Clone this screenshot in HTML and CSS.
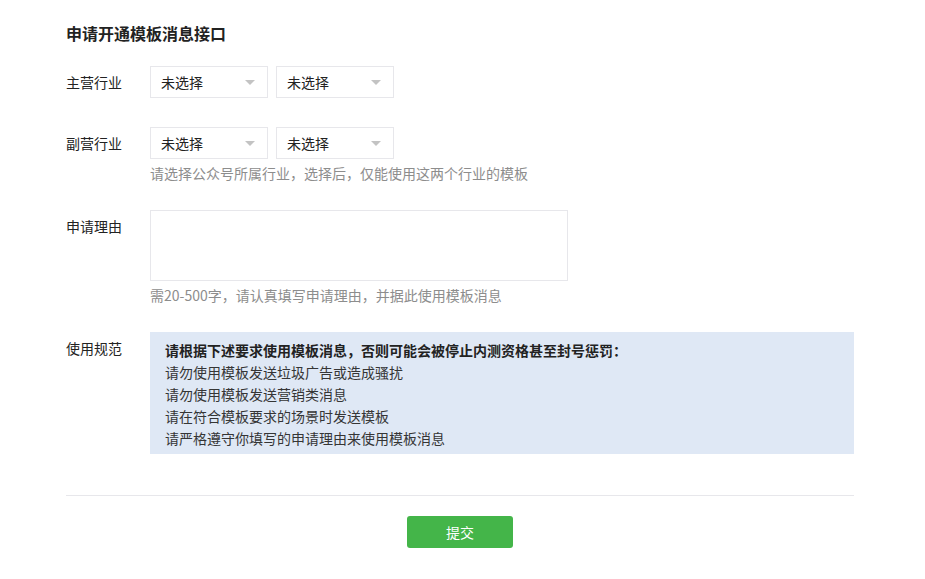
FILE: index.html
```html
<!DOCTYPE html>
<html lang="zh-CN">
<head>
    <meta charset="UTF-8">
    <meta name="viewport" content="width=device-width, initial-scale=1.0">
    <title>申请开通模板消息接口</title>
    <link rel="stylesheet" href="styles.css">
</head>
<body>
    <div class="page">
        <h2 class="page-title">申请开通模板消息接口</h2>

        <div class="form-row row-main">
            <label class="form-label">主营行业</label>
            <div class="form-field">
                <div class="selects">
                    <div class="select"><span>未选择</span><i class="arrow"></i></div>
                    <div class="select"><span>未选择</span><i class="arrow"></i></div>
                </div>
            </div>
        </div>

        <div class="form-row">
            <label class="form-label">副营行业</label>
            <div class="form-field">
                <div class="selects">
                    <div class="select"><span>未选择</span><i class="arrow"></i></div>
                    <div class="select"><span>未选择</span><i class="arrow"></i></div>
                </div>
                <p class="tips">请选择公众号所属行业，选择后，仅能使用这两个行业的模板</p>
            </div>
        </div>

        <div class="form-row">
            <label class="form-label">申请理由</label>
            <div class="form-field">
                <textarea class="reason"></textarea>
                <p class="tips">需20-500字，请认真填写申请理由，并据此使用模板消息</p>
            </div>
        </div>

        <div class="form-row row-last">
            <label class="form-label">使用规范</label>
            <div class="form-field">
                <div class="notice">
                    <p class="notice-title">请根据下述要求使用模板消息，否则可能会被停止内测资格甚至封号惩罚：</p>
                    <p>请勿使用模板发送垃圾广告或造成骚扰</p>
                    <p>请勿使用模板发送营销类消息</p>
                    <p>请在符合模板要求的场景时发送模板</p>
                    <p>请严格遵守你填写的申请理由来使用模板消息</p>
                </div>
            </div>
        </div>

        <div class="form-footer">
            <button class="btn-submit">提交</button>
        </div>
    </div>
</body>
</html>
```

FILE: styles.css
```css
* {
    margin: 0;
    padding: 0;
    box-sizing: border-box;
}
body {
    font-family: "Noto Sans CJK SC", "Noto Sans", sans-serif;
    font-size: 14px;
    color: #222;
    background: #fff;
}
.page {
    width: 788px;
    margin-left: 66px;
    padding-top: 21px;
}
.page-title {
    font-size: 16px;
    font-weight: bold;
    line-height: 24px;
    color: #222;
    margin-bottom: 21px;
}
.form-row {
    display: flex;
    margin-bottom: 26px;
}
.row-main {
    margin-bottom: 29px;
}
.row-last {
    margin-bottom: 0;
}
.form-label {
    width: 84px;
    flex-shrink: 0;
    line-height: 32px;
    color: #222;
}
.form-field {
    flex: 1;
}
.selects {
    display: flex;
    gap: 8px;
}
.select {
    position: relative;
    width: 118px;
    height: 32px;
    line-height: 30px;
    padding-left: 10px;
    border: 1px solid #e7e7eb;
    background: #fff;
    color: #222;
}
.arrow {
    position: absolute;
    right: 12px;
    top: 13px;
    width: 0;
    height: 0;
    border-left: 5px solid transparent;
    border-right: 5px solid transparent;
    border-top: 5px solid #c3c3c3;
}
.tips {
    margin-top: 3px;
    line-height: 22px;
    color: #8d8d8d;
}
.reason {
    display: block;
    width: 418px;
    height: 71px;
    border: 1px solid #e7e7eb;
    resize: none;
    outline: none;
}
.notice {
    background: #dfe8f5;
    padding: 7px 15px 5px;
    line-height: 22px;
    color: #353535;
}
.notice-title {
    font-weight: bold;
    color: #222;
}
.form-footer {
    margin-top: 41px;
    border-top: 1px solid #e7e7eb;
    padding-top: 20px;
    text-align: center;
}
.btn-submit {
    width: 106px;
    height: 32px;
    border: none;
    border-radius: 3px;
    background: #44b549;
    color: #fff;
    font-family: inherit;
    font-size: 14px;
}
```
